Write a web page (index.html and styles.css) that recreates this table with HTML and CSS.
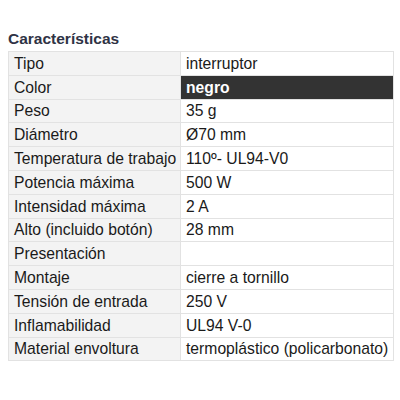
FILE: index.html
```html
<!DOCTYPE html>
<html lang="es">
<head>
<meta charset="utf-8">
<link rel="stylesheet" href="styles.css">
</head>
<body>
<div class="specs">
  <h3 class="specs-title">Características</h3>
  <table class="specs-table">
    <tbody>
      <tr><th>Tipo</th><td>interruptor</td></tr>
      <tr><th>Color</th><td class="swatch">negro</td></tr>
      <tr><th>Peso</th><td>35 g</td></tr>
      <tr><th>Diámetro</th><td>Ø70 mm</td></tr>
      <tr><th>Temperatura de trabajo</th><td>110º- UL94-V0</td></tr>
      <tr><th>Potencia máxima</th><td>500 W</td></tr>
      <tr><th>Intensidad máxima</th><td>2 A</td></tr>
      <tr><th>Alto (incluido botón)</th><td>28 mm</td></tr>
      <tr><th>Presentación</th><td></td></tr>
      <tr><th>Montaje</th><td>cierre a tornillo</td></tr>
      <tr><th>Tensión de entrada</th><td>250 V</td></tr>
      <tr><th>Inflamabilidad</th><td>UL94 V-0</td></tr>
      <tr><th>Material envoltura</th><td>termoplástico (policarbonato)</td></tr>
    </tbody>
  </table>
</div>
</body>
</html>
```
FILE: styles.css
```css
html, body {
  background: #ffffff;
}
body {
  margin: 0;
  padding: 30px 6px 0 8px;
  font-family: "Liberation Sans", Arial, Helvetica, sans-serif;
  color: #1a1a1a;
}
.specs-title {
  margin: 0 0 3px 0;
  font-size: 15.5px;
  line-height: 18px;
  font-weight: bold;
  color: #2f3345;
}
.specs-table {
  width: 100%;
  border-collapse: collapse;
  table-layout: fixed;
  font-size: 15.7px;
}
.specs-table th,
.specs-table td {
  border: 1px solid #e2e2e2;
  height: 22.8px;
  padding: 0 3px 0 5px;
  text-align: left;
  vertical-align: middle;
  line-height: 17px;
  white-space: nowrap;
}
.specs-table th {
  width: 163px;
  font-weight: normal;
  background: #f3f3f3;
}
.specs-table td {
  background: #ffffff;
}
.specs-table td.swatch {
  background: #333333;
  color: #ffffff;
  font-weight: bold;
}
```
